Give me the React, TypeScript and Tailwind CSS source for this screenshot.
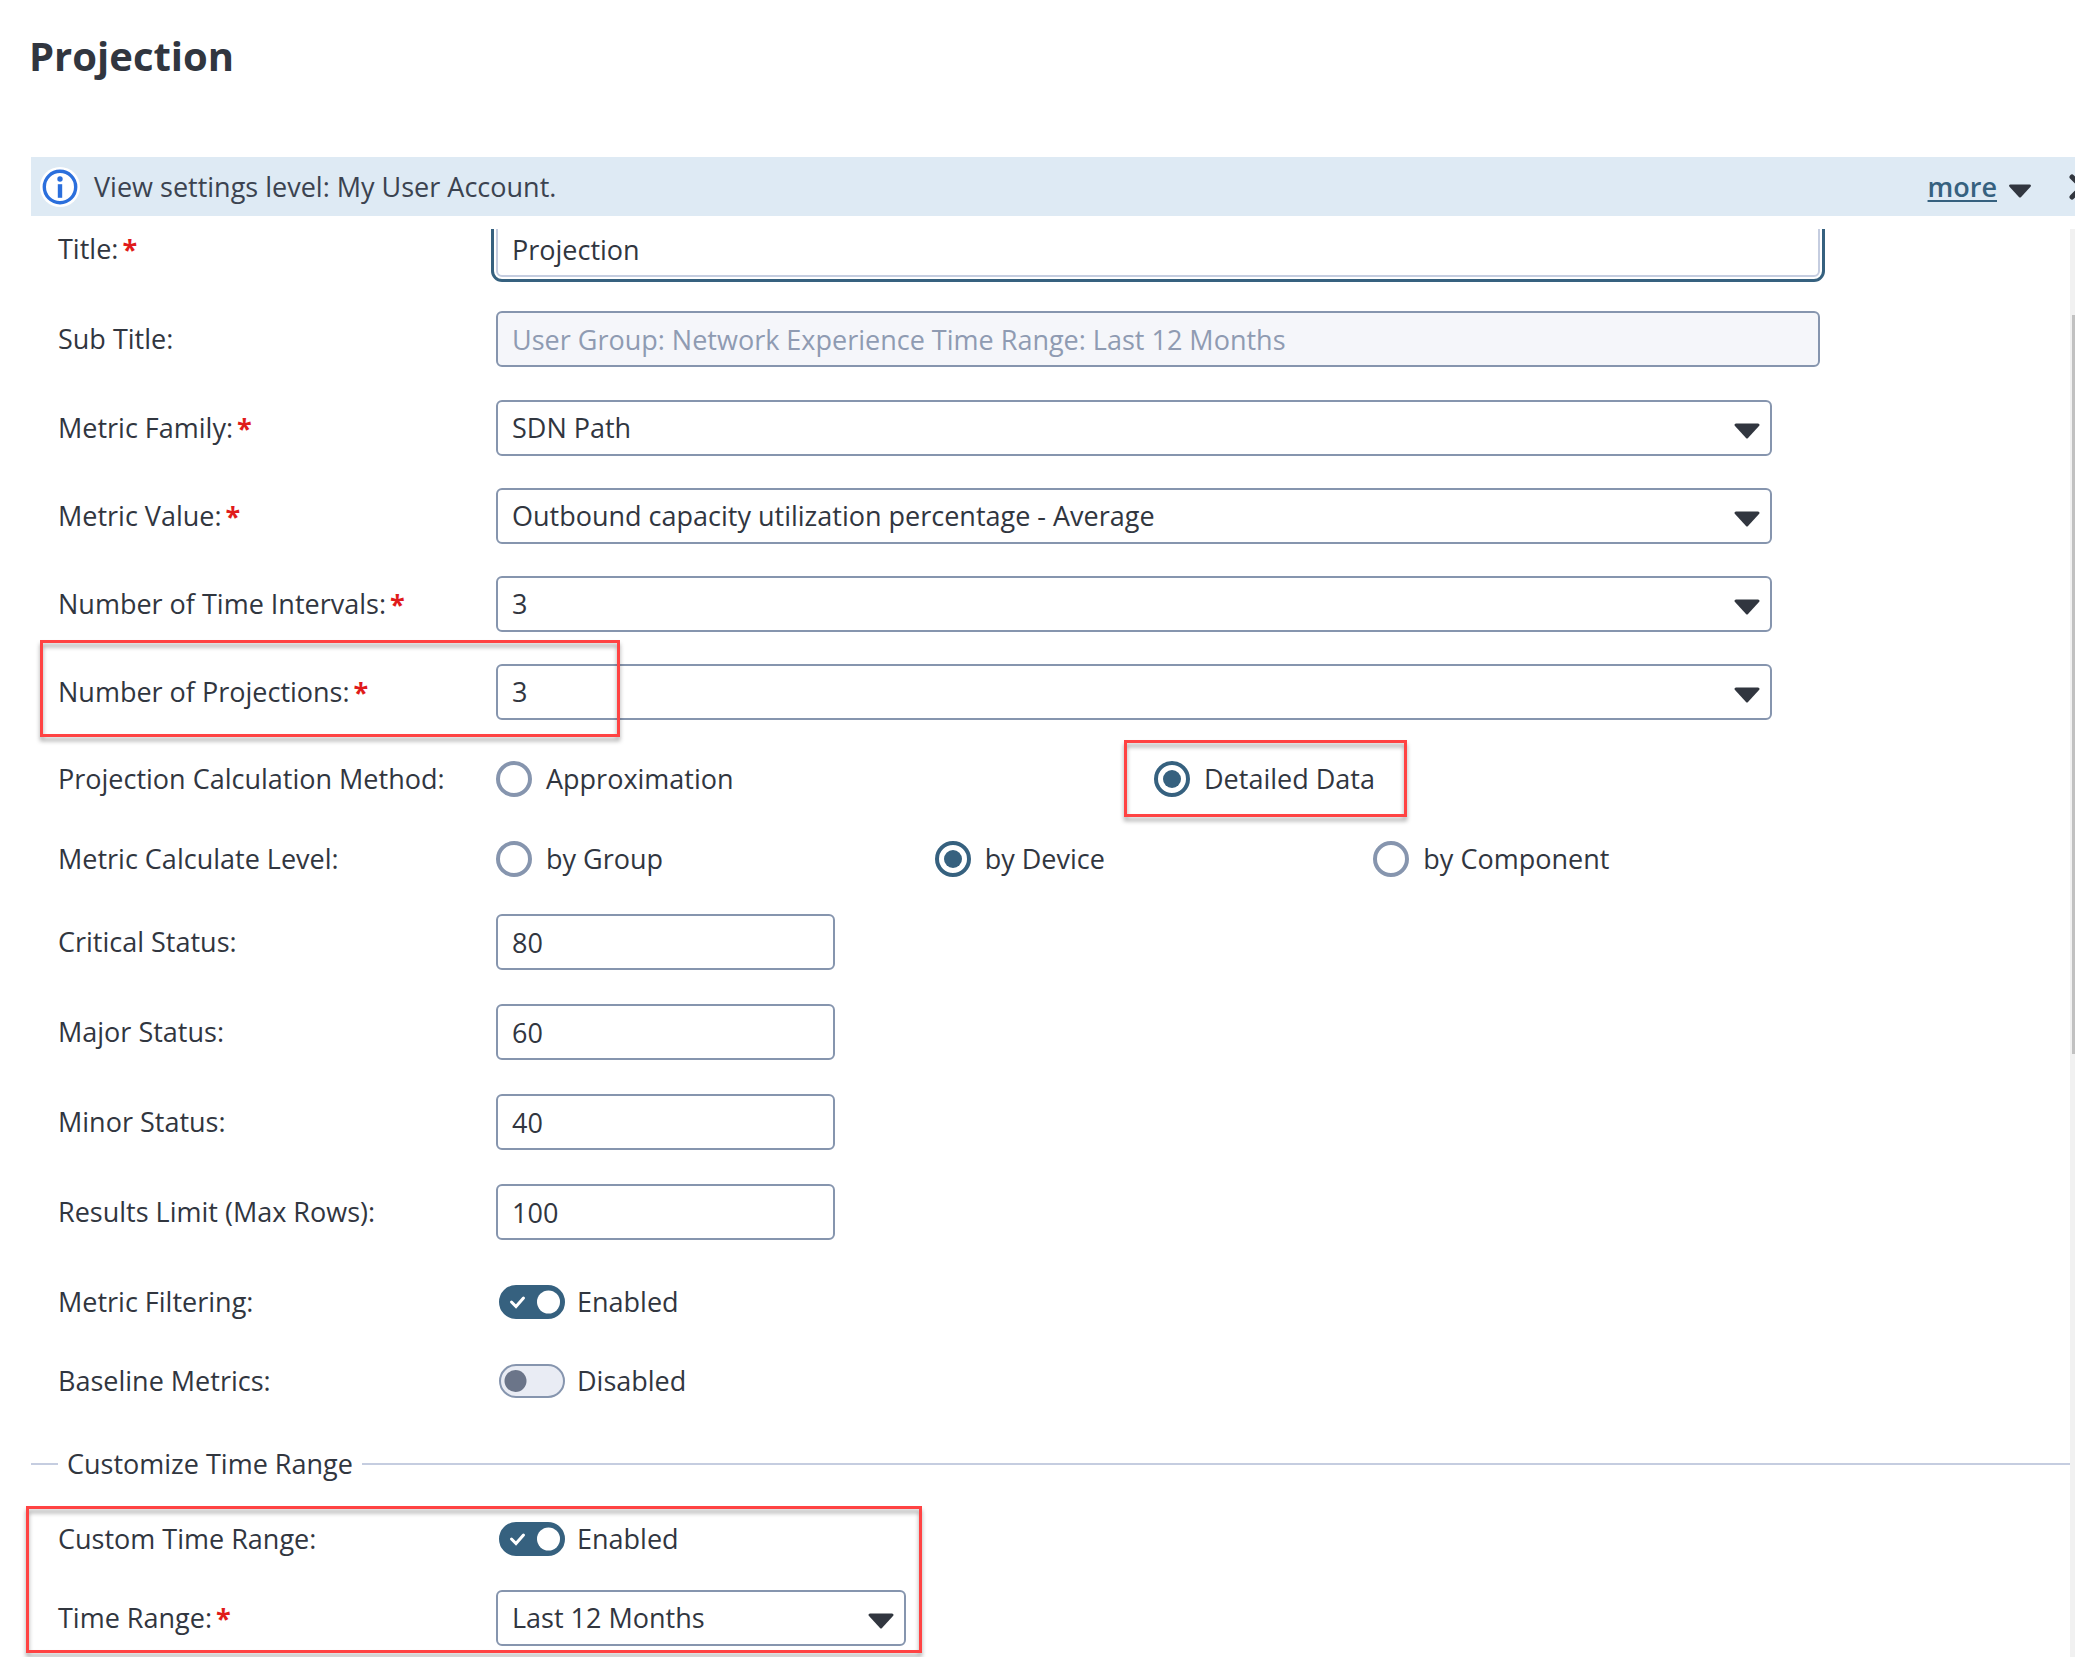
import React, { useState } from 'react';

const BOX = 'h-14 rounded-md border-2 border-[#8695ae] px-[14px] text-[27px] text-[#31363f]';
const HIGHLIGHT =
  'pointer-events-none absolute border-3 border-[#ff4343] drop-shadow-[0_4px_2px_rgba(0,0,0,0.35)]';

const Arrow: React.FC<{ className?: string }> = ({ className = '' }) => (
  <svg viewBox="0 0 26 16" aria-hidden="true" className={className}>
    <path d="M2 0.5h22q2.4 0.4 1 2.6L14 15q-1 1-2 0L1 3.1Q-0.4 0.9 2 0.5z" fill="#31363f" />
  </svg>
);

type RowProps = {
  id?: string;
  label: string;
  required?: boolean;
  height: string;
  children: React.ReactNode;
};

const Row: React.FC<RowProps> = ({ id, label, required, height, children }) => (
  <div className={`relative flex items-center ${height}`}>
    <label htmlFor={id} className="flex w-[438px] shrink-0 gap-1">
      {label}
      {required && <span className="font-bold text-[#e01b1b]">*</span>}
    </label>
    {children}
  </div>
);

const Select: React.FC<{ id: string; value: string; className: string }> = ({ id, value, className }) => (
  <div className={`relative ${className}`}>
    <select id={id} defaultValue={value} className={`${BOX} w-full appearance-none bg-white`}>
      <option>{value}</option>
    </select>
    <Arrow className="pointer-events-none absolute right-3 top-[23px] h-4 w-[26px]" />
  </div>
);

const Radio: React.FC<{ name: string; label: string; checked?: boolean; highlight?: boolean }> = ({
  name,
  label,
  checked,
  highlight,
}) => (
  <div className="flex flex-1">
    <label className="relative flex items-center gap-[14px]">
      <input
        type="radio"
        name={name}
        defaultChecked={checked}
        className="size-9 appearance-none rounded-full border-4 border-[#8695ae] bg-white p-[5px] bg-clip-content checked:border-[#36617f] checked:bg-[#36617f]"
      />
      {label}
      {highlight && <span className={`${HIGHLIGHT} -left-[30px] -right-8 -top-[21px] -bottom-5`} />}
    </label>
  </div>
);

const Toggle: React.FC<{ id: string; on?: boolean }> = ({ id, on = false }) => {
  const [enabled, setEnabled] = useState(on);
  return (
    <div className="flex items-center gap-3 pl-[3px]">
      <span className="relative flex">
        <input
          id={id}
          type="checkbox"
          role="switch"
          checked={enabled}
          onChange={() => setEnabled(!enabled)}
          className="h-[34px] w-[66px] appearance-none rounded-full border-2 border-[#8695ae] bg-[#e9ecf4] checked:border-[#36617f] checked:bg-[#36617f]"
        />
        <svg viewBox="0 0 66 34" aria-hidden="true" className="pointer-events-none absolute inset-0">
          {enabled ? (
            <>
              <path d="M12.5 17l4.5 4.5 7.5-8.5" fill="none" stroke="#fff" strokeWidth="3" strokeLinecap="round" />
              <circle cx="49.5" cy="17" r="11.5" fill="#fff" />
            </>
          ) : (
            <circle cx="16.5" cy="17" r="11" fill="#6b7589" />
          )}
        </svg>
      </span>
      <span>{enabled ? 'Enabled' : 'Disabled'}</span>
    </div>
  );
};

const SELECTS = [
  { id: 'family', label: 'Metric Family:', value: 'SDN Path' },
  { id: 'value', label: 'Metric Value:', value: 'Outbound capacity utilization percentage - Average' },
  { id: 'intervals', label: 'Number of Time Intervals:', value: '3' },
  { id: 'projections', label: 'Number of Projections:', value: '3', highlight: true },
];

const NUMBERS = [
  { id: 'critical', label: 'Critical Status:', value: '80' },
  { id: 'major', label: 'Major Status:', value: '60' },
  { id: 'minor', label: 'Minor Status:', value: '40' },
  { id: 'limit', label: 'Results Limit (Max Rows):', value: '100' },
];

const App: React.FC = () => {
  return (
    <div className="flex h-screen flex-col overflow-hidden bg-white font-['Open_Sans','Noto_Sans',sans-serif] text-[27px] leading-9 text-[#31363f]">
      <header className="h-[157px] shrink-0 px-[29px] pt-8">
        <h1 className="text-[40px] font-bold leading-[48px]">Projection</h1>
      </header>

      {/* Settings level banner */}
      <div className="ml-[31px] flex h-[59px] shrink-0 items-center bg-[#deeaf4] pl-[9px]">
        <svg viewBox="0 0 40 40" aria-hidden="true" className="size-10">
          <circle cx="20" cy="20" r="20" fill="#fff" />
          <circle cx="20" cy="20" r="15.7" fill="none" stroke="#2b6fdc" strokeWidth="3.4" />
          <circle cx="20" cy="12" r="2.7" fill="#2b6fdc" />
          <path d="M17.8 17.2h4.4v13.6h-4.4z" fill="#2b6fdc" />
        </svg>
        <p className="flex-1 pl-[14px] text-[#3b4350]">View settings level: My User Account.</p>
        <a href="#more" className="font-semibold text-[#36617f] underline decoration-2 underline-offset-3">more</a>
        <Arrow className="ml-[11px] mt-2 h-[14px] w-6" />
        <button type="button" aria-label="Close" className="-mr-5 ml-[37px]">
          <svg viewBox="0 0 26 26" className="size-[26px]">
            <path d="M3 3l20 20M23 3L3 23" stroke="#31363f" strokeWidth="5" strokeLinecap="round" />
          </svg>
        </button>
      </div>

      <div className="mt-[13px] flex min-h-0 flex-1">
        <form className="flex-1 overflow-hidden pl-[58px]">
          {/* list is scrolled down a little, so the first field is cut */}
          <div className="-mt-[25px] pr-[250px]">
            <Row id="title" label="Title:" required height="h-[90px]">
              <input
                id="title"
                type="text"
                defaultValue="Projection"
                className="h-14 min-w-0 flex-1 rounded-md border-2 border-[#c5cde0] px-[14px] outline-3 outline-offset-2 outline-[#36617f]"
              />
            </Row>
            <Row id="subtitle" label="Sub Title:" height="h-[90px]">
              <input
                id="subtitle"
                type="text"
                disabled
                defaultValue="User Group: Network Experience Time Range: Last 12 Months"
                className="h-14 min-w-0 flex-1 rounded-md border-2 border-[#8695ae] bg-[#f5f6fa] px-[14px] text-[#8f9bb2]"
              />
            </Row>
            {SELECTS.map((s) => (
              <Row key={s.id} id={s.id} label={s.label} required height="h-[88px]">
                <Select id={s.id} value={s.value} className="mr-12 flex-1" />
                {s.highlight && <span className={`${HIGHLIGHT} -left-[18px] -top-2 h-[97px] w-[580px]`} />}
              </Row>
            ))}

            <Row label="Projection Calculation Method:" height="h-[81px] pt-1">
              <div className="mr-2 flex flex-1">
                <Radio name="method" label="Approximation" />
                <Radio name="method" label="Detailed Data" checked highlight />
              </div>
            </Row>
            <Row label="Metric Calculate Level:" height="h-20 pt-1">
              <div className="mr-2 flex flex-1">
                <Radio name="level" label="by Group" />
                <Radio name="level" label="by Device" checked />
                <Radio name="level" label="by Component" />
              </div>
            </Row>

            {NUMBERS.map((n) => (
              <Row key={n.id} id={n.id} label={n.label} height="h-[90px]">
                <input id={n.id} type="text" defaultValue={n.value} className={`${BOX} w-[339px]`} />
              </Row>
            ))}

            <div className="mt-[5px]">
              <Row id="filtering" label="Metric Filtering:" height="h-[79px]">
                <Toggle id="filtering" on />
              </Row>
              <Row id="baseline" label="Baseline Metrics:" height="h-[79px]">
                <Toggle id="baseline" />
              </Row>
            </div>
          </div>

          {/* Customize Time Range */}
          <div className="-ml-[27px] flex h-[79px] items-center gap-[9px] pt-[9px]">
            <span className="h-[2px] w-[27px] bg-[#c5cde0]" />
            <h2>Customize Time Range</h2>
            <span className="h-[2px] flex-1 bg-[#c5cde0]" />
          </div>
          <div className="relative">
            <Row id="custom" label="Custom Time Range:" height="h-[79px]">
              <Toggle id="custom" on />
            </Row>
            <Row id="range" label="Time Range:" required height="h-[79px]">
              <Select id="range" value="Last 12 Months" className="w-[410px]" />
            </Row>
            <span className={`${HIGHLIGHT} -left-8 top-[7px] h-[147px] w-[896px]`} />
          </div>
        </form>

        {/* Scrollbar */}
        <div className="w-[5px] shrink-0 bg-[#f1f1f1] pl-[2px] pt-[86px]">
          <div className="h-[739px] bg-[#c1c1c1]" />
        </div>
      </div>
    </div>
  );
};

export default App;
